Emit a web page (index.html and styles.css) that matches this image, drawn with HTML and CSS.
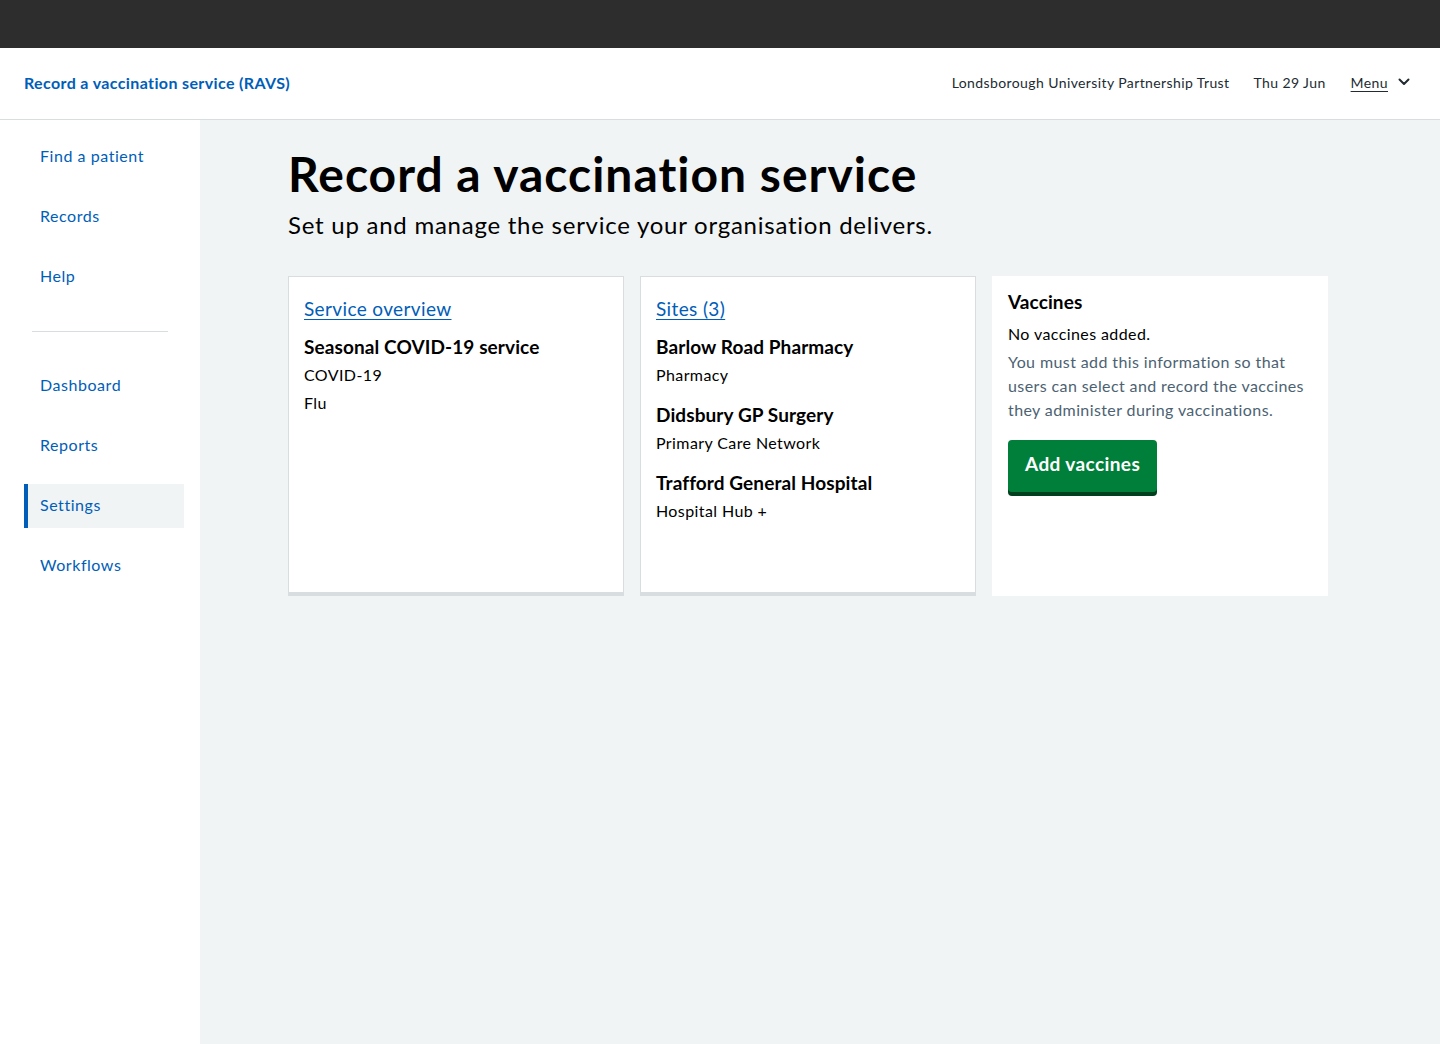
FILE: index.html
```html
<!DOCTYPE html>
<html lang="en">
<head>
<meta charset="utf-8">
<title>Record a vaccination service</title>
<link rel="stylesheet" href="styles.css">
</head>
<body>
<div class="topbar"></div>
<header class="header">
  <a class="service-name" href="#">Record a vaccination service (RAVS)</a>
  <div class="header-right">
    <span class="org">Londsborough University Partnership Trust</span>
    <span class="date">Thu 29 Jun</span>
    <a class="menu" href="#"><span class="menu-text">Menu</span>
      <svg class="chev" width="12" height="8" viewBox="0 0 12 8" aria-hidden="true"><path d="M1.5 1.5 L6 6 L10.5 1.5" fill="none" stroke="#212b32" stroke-width="2" stroke-linecap="round" stroke-linejoin="round"/></svg>
    </a>
  </div>
</header>
<div class="layout">
  <nav class="sidebar">
    <ul class="nav-list">
      <li><a href="#">Find a patient</a></li>
      <li><a href="#">Records</a></li>
      <li><a href="#">Help</a></li>
    </ul>
    <hr class="divider">
    <ul class="nav-list">
      <li><a href="#">Dashboard</a></li>
      <li><a href="#">Reports</a></li>
      <li class="active"><a href="#">Settings</a></li>
      <li><a href="#">Workflows</a></li>
    </ul>
  </nav>
  <main class="main">
    <h1 class="title">Record a vaccination service</h1>
    <p class="lead">Set up and manage the service your organisation delivers.</p>
    <div class="cards">
      <section class="card">
        <a class="card-link" href="#">Service overview</a>
        <h2 class="card-heading">Seasonal COVID-19 service</h2>
        <p class="card-text">COVID-19</p>
        <p class="card-text">Flu</p>
      </section>
      <section class="card">
        <a class="card-link" href="#">Sites (3)</a>
        <h2 class="card-heading">Barlow Road Pharmacy</h2>
        <p class="card-text">Pharmacy</p>
        <h2 class="card-heading spaced">Didsbury GP Surgery</h2>
        <p class="card-text">Primary Care Network</p>
        <h2 class="card-heading spaced">Trafford General Hospital</h2>
        <p class="card-text">Hospital Hub +</p>
      </section>
      <section class="card plain">
        <h2 class="card-title">Vaccines</h2>
        <p class="card-text">No vaccines added.</p>
        <p class="hint">You must add this information so that users can select and record the vaccines they administer during vaccinations.</p>
        <a class="button" href="#">Add vaccines</a>
      </section>
    </div>
  </main>
</div>
</body>
</html>
```

FILE: styles.css
```css
* { box-sizing: border-box; }
html, body { margin: 0; padding: 0; }
body {
  font-family: Lato, "Liberation Sans", Arial, sans-serif;
  color: #212b32;
  background: #f0f4f5;
  min-height: 1044px;
  letter-spacing: 0.025em;
}
a { color: #005eb8; }

.topbar { height: 48px; background: #2d2d2d; }

.header {
  height: 72px;
  background: #ffffff;
  border-bottom: 1px solid #d8dde0;
  display: flex;
  align-items: center;
  justify-content: space-between;
  padding: 0 30px 3px 24px;
}
.service-name {
  font-weight: 700;
  font-size: 16px;
  letter-spacing: 0.37px;
  text-decoration: none;
  color: #005eb8;
}
.header-right {
  display: flex;
  align-items: center;
  gap: 24px;
  font-size: 14px;
  color: #212b32;
}
.menu {
  display: flex;
  align-items: center;
  gap: 10px;
  margin-left: 1px;
  color: #212b32;
  text-decoration: none;
}
.menu-text { text-decoration: underline; text-underline-offset: 3px; }

.layout { display: flex; min-height: 924px; }
.sidebar {
  width: 200px;
  flex: none;
  background: #ffffff;
  padding: 15px 16px 0 24px;
}
.nav-list { list-style: none; margin: 0; padding: 0; }
.nav-list li {
  height: 44px;
  margin-bottom: 16px;
  display: flex;
  align-items: center;
  padding-left: 16px;
  padding-bottom: 4px;
}
.nav-list li a {
  font-size: 16px;
  letter-spacing: 0.55px;
  text-decoration: none;
  color: #005eb8;
}
.nav-list li.active {
  background: #f0f4f5;
  border-left: 4px solid #005eb8;
  padding-left: 12px;
}
.divider {
  border: 0;
  border-top: 1px solid #d8dde0;
  margin: 32px 16px 32px 8px;
}

.main { flex: 1; padding: 26px 88px 0 88px; }
.title {
  font-size: 48px;
  font-weight: 700;
  line-height: 56px;
  letter-spacing: 1px;
  margin: 0;
  color: #000;
}
.lead {
  font-size: 24px;
  line-height: 32px;
  letter-spacing: 0.75px;
  margin: 7px 0 35px;
  color: #000;
}
.cards {
  display: grid;
  grid-template-columns: repeat(3, 336px);
  gap: 16px;
}
.card {
  height: 320px;
  background: #ffffff;
  border: 1px solid #d8dde0;
  border-bottom: 4px solid #d8dde0;
  padding: 19px 15px;
}
.card.plain { border: none; padding: 14px 16px; }
.card-link {
  display: block;
  font-size: 19px;
  line-height: 26px;
  letter-spacing: 0.37px;
  text-underline-offset: 3px;
  margin: 0 0 12px;
}
.card-heading {
  font-size: 19px;
  line-height: 26px;
  font-weight: 700;
  letter-spacing: 0.1px;
  margin: 0 0 1px;
  color: #000;
}
.card-heading.spaced { margin-top: 13px; }
.card-text {
  font-size: 16px;
  line-height: 28px;
  margin: 0;
  color: #000;
}
.card-title {
  font-size: 19px;
  line-height: 24px;
  font-weight: 700;
  letter-spacing: 0.1px;
  margin: 0 0 6px;
  color: #000;
}
.hint {
  font-size: 16px;
  line-height: 24px;
  color: #4c6272;
  margin: 2px 0 18px;
}
.button {
  display: inline-block;
  background: #007f3b;
  color: #ffffff;
  font-size: 19px;
  font-weight: 700;
  line-height: 24px;
  letter-spacing: 0.4px;
  padding: 12px 17px 16px;
  border-radius: 4px;
  box-shadow: 0 4px 0 #00401e;
  text-decoration: none;
}
```
